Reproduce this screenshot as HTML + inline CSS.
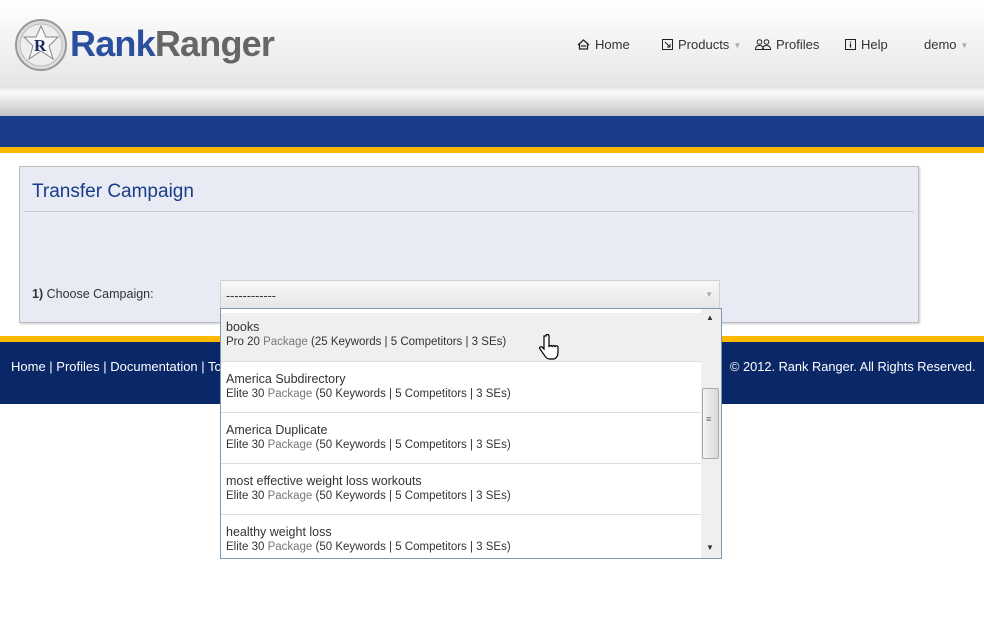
<!DOCTYPE html>
<html><head><meta charset="utf-8"><style>
*{margin:0;padding:0;box-sizing:border-box}
body{width:984px;height:635px;background:#fff;font-family:"Liberation Sans",sans-serif;position:relative;overflow:hidden;color:#333}
.hdr{position:absolute;left:0;top:0;width:984px;height:86px;background:linear-gradient(#fff,#e6e6e6)}
.band{position:absolute;left:0;top:86px;width:984px;height:30px;background:linear-gradient(#e0e0e0 0,#fafafa 6px,#c4c4c4 30px)}
.blue{position:absolute;left:0;top:116px;width:984px;height:31px;background:#183c8a}
.yel{position:absolute;left:0;top:147px;width:984px;height:6px;background:#fdb900}
.logo{position:absolute;left:14px;top:17px}
.brand{position:absolute;left:70px;top:23px;font-size:36px;font-weight:bold;letter-spacing:-0.8px}
.nav{position:absolute;top:37px;font-size:13px;color:#333;white-space:nowrap}
.nav svg{vertical-align:-1px;margin-right:5px}
.caret{color:#aaa;font-size:8px;margin-left:4px;vertical-align:1px}
.panel{position:absolute;left:19px;top:166px;width:900px;height:157px;background:#e9ebf4;border:1px solid #bcbcbc;box-shadow:1px 1px 2px #ccc}
.panel h1{position:absolute;left:12px;top:14px;font-size:19px;font-weight:normal;color:#183c8a}
.panel .ln{position:absolute;left:4px;right:4px;top:44px;border-top:1px solid #c9ccd6}
.lbl{position:absolute;left:32px;top:287px;font-size:12.5px}
.sel{position:absolute;left:220px;top:280px;width:500px;height:29px;background:linear-gradient(#f8f8f8,#e6e6e6);border:1px solid #d0d0d0;font-size:12.5px;padding:8px 0 0 5px}
.fy{position:absolute;left:0;top:336px;width:984px;height:6px;background:#fdb900}
.foot{position:absolute;left:0;top:342px;width:984px;height:62px;background:#0a2867;color:#fff;font-size:13px}
.dd{position:absolute;left:220px;top:308px;width:502px;height:251px;border:1px solid #7d98b0;background:#fff;overflow:hidden}
.it{position:absolute;left:0;width:480px;height:51px;padding:11px 0 0 5px;font-size:12.5px;border-bottom:1px solid #ddd}
.it small{display:block;font-size:11.5px;margin-top:2px}
.it small i{font-style:normal;color:#777}
.sb{position:absolute;left:480px;top:0;width:20px;height:249px;background:#efefef}
.th{position:absolute;left:1px;top:79px;width:17px;height:71px;border:1px solid #aaa;border-radius:2px;background:linear-gradient(90deg,#f4f4f4,#d8d8d8)}
</style></head><body>
<div class="hdr"></div><div class="band"></div><div class="blue"></div><div class="yel"></div>
<svg class="logo" width="54" height="56" viewBox="0 0 54 56"><circle cx="27" cy="28" r="25" fill="#ddd" stroke="#999" stroke-width="2"/><circle cx="27" cy="28" r="21" fill="#eee" stroke="#bbb"/><polygon points="27,9 32,20 44,20 35,29 39,42 27,34 15,42 19,29 10,20 22,20" fill="#f7f7f7" stroke="#888"/><text x="20" y="34" font-family="Liberation Serif" font-weight="bold" font-size="17" fill="#1a2a5a">R</text></svg>
<div class="brand"><span style="color:#2b4f9e">Rank</span><span style="color:#666">Ranger</span></div>
<div class="nav" style="left:577px"><svg width="13" height="11" viewBox="0 0 13 11"><path d="M1 6L6.5 1 12 6M2.5 5v5h8V5M4 7h5" fill="none" stroke="#222" stroke-width="1.3"/></svg>Home</div>
<div class="nav" style="left:662px"><svg width="11" height="11" viewBox="0 0 11 11"><rect x=".5" y=".5" width="10" height="10" fill="none" stroke="#222"/><path d="M3 3l5 5M8 5v3H5" fill="none" stroke="#222"/></svg>Products<span class="caret">▼</span></div>
<div class="nav" style="left:755px"><svg width="16" height="11" viewBox="0 0 16 11"><circle cx="4.5" cy="3" r="2.3" fill="none" stroke="#222"/><circle cx="11.5" cy="3" r="2.3" fill="none" stroke="#222"/><path d="M.5 10.5c0-3 2-4 4-4s4 1 4 4zM7.5 10.5c0-3 2-4 4-4s4 1 4 4z" fill="none" stroke="#222"/></svg>Profiles</div>
<div class="nav" style="left:845px"><svg width="11" height="11" viewBox="0 0 11 11"><rect x=".5" y=".5" width="10" height="10" fill="none" stroke="#222"/><path d="M5.5 2.5v1M5.5 4.5v4" stroke="#222" stroke-width="1.3"/></svg>Help</div>
<div class="nav" style="left:924px">demo<span class="caret">▼</span></div>
<div class="panel"><h1>Transfer Campaign</h1><div class="ln"></div></div>
<div class="lbl"><b>1)</b> Choose Campaign:</div>
<div class="sel">------------<span style="position:absolute;right:6px;top:9px;color:#aaa;font-size:8px">▼</span></div>
<div class="fy"></div>
<div class="foot"><span style="position:absolute;left:11px;top:17px">Home | Profiles | Documentation | To</span><span style="position:absolute;left:730px;top:17px;font-size:12.8px">© 2012. Rank Ranger. All Rights Reserved.</span></div>
<div class="dd">
<div class="it" style="top:4px;height:49px;background:#efefef;padding-top:7px">books<small>Pro 20 <i>Package</i> (25 Keywords | 5 Competitors | 3 SEs)</small></div>
<div class="it" style="top:53px;padding-top:10px">America Subdirectory<small>Elite 30 <i>Package</i> (50 Keywords | 5 Competitors | 3 SEs)</small></div>
<div class="it" style="top:104px;padding-top:10px">America Duplicate<small>Elite 30 <i>Package</i> (50 Keywords | 5 Competitors | 3 SEs)</small></div>
<div class="it" style="top:155px;padding-top:10px">most effective weight loss workouts<small>Elite 30 <i>Package</i> (50 Keywords | 5 Competitors | 3 SEs)</small></div>
<div class="it" style="top:206px;padding-top:10px;border:0">healthy weight loss<small>Elite 30 <i>Package</i> (50 Keywords | 5 Competitors | 3 SEs)</small></div>
<div class="sb"><span style="position:absolute;left:5px;top:4px;font-size:8px;color:#333">▲</span><div class="th"><span style="position:absolute;left:3px;top:25px;font-size:9px;color:#666">≡</span></div><span style="position:absolute;left:5px;top:234px;font-size:8px;color:#333">▼</span></div>
</div>
<svg style="position:absolute;left:538px;top:334px" width="22" height="28" viewBox="0 0 22 28"><path d="M6 2v13l-2-2c-2-1-3 1-2 2l5 7c1 2 3 3 5 3h3c3 0 5-3 5-6v-6c0-1-2-2-3 0 0-2-2-2-3 0 0-2-2-2-3 0V2c0-2-3-2-3 0z" fill="#fff" stroke="#000" stroke-width="1.2"/></svg>
</body></html>
